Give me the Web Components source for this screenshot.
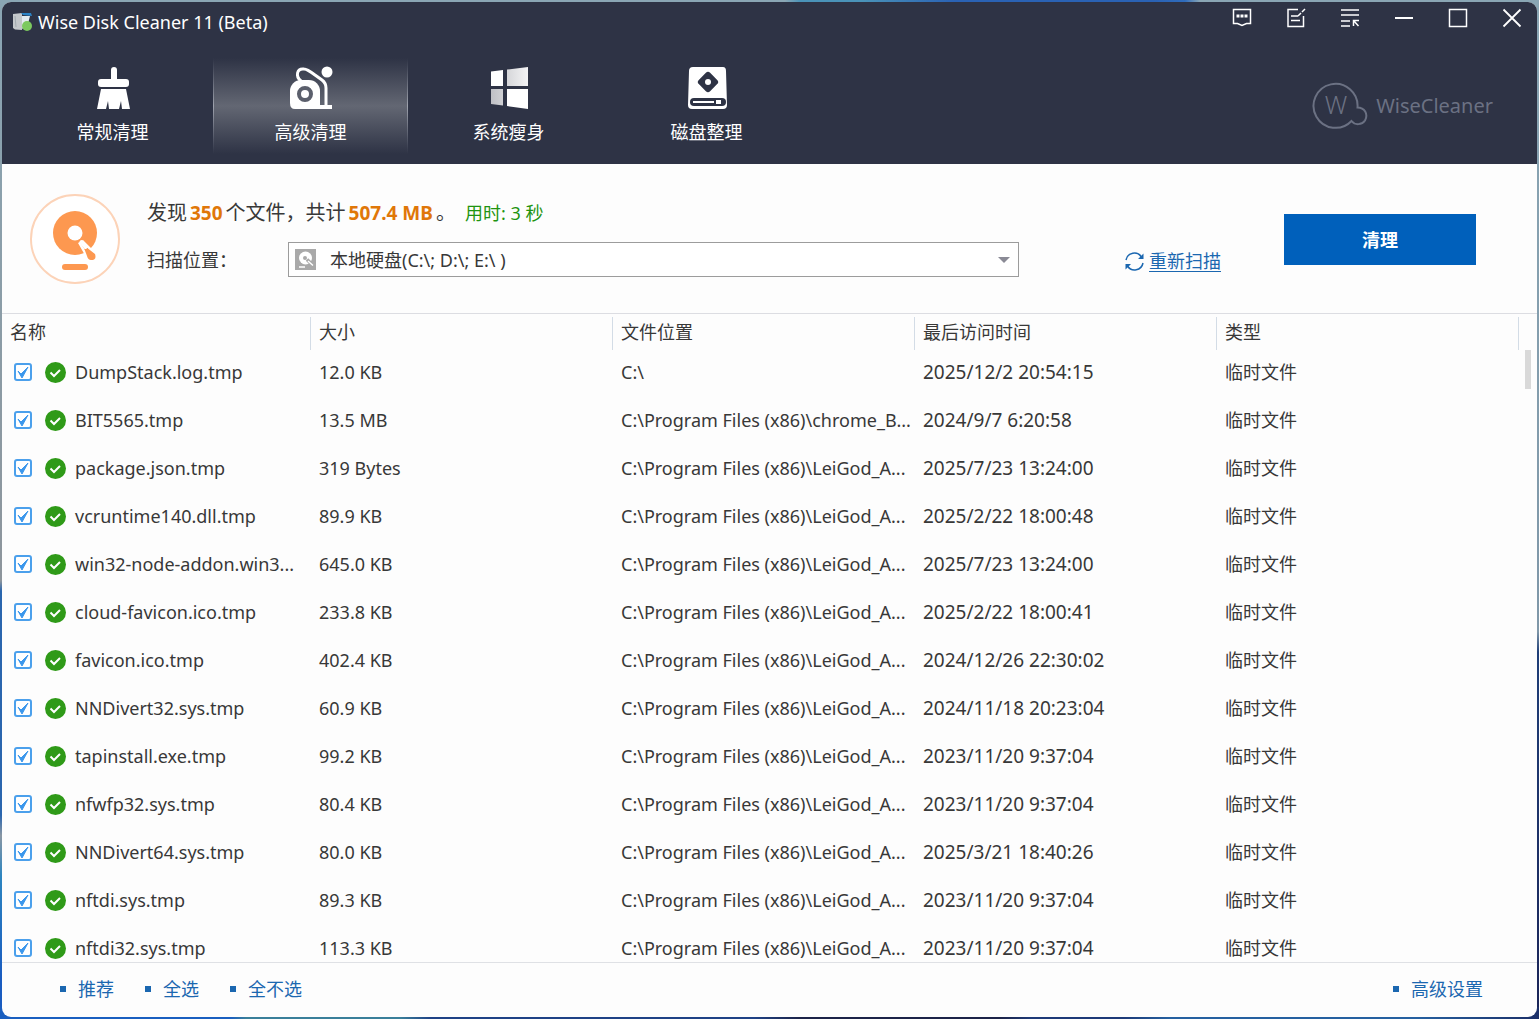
<!DOCTYPE html>
<html lang="zh-CN">
<head>
<meta charset="utf-8">
<title>Wise Disk Cleaner 11 (Beta)</title>
<style>
html, body { height: 100%; margin: 0; }
body {
  --link: #1b67b0;
  --text: #383838;
  box-sizing: border-box;
  padding: 2px;
  background:
    linear-gradient(90deg, #8aa6b4 0 51%, #4a93b8 52% 56%, #2a62b4 62% 75%, #2f6cbc 77%, #8aa6b4 78%) top / 100% 4px no-repeat,
    linear-gradient(90deg, #1a5fc0 0 15%, #3a7f9a 16% 26%, #1f4286 28% 49%, #1c2348 52% 65%, #1d3a78 67% 73%, #2560a0 76% 92%, #1b2f68) bottom / 100% 12px no-repeat,
    linear-gradient(180deg, #8aa6b4, #8d959c 57%, #2a66ae 58% 80%, #8a97a4 82%, #2d85c0 86%, #1a5cc0 96%) left / 12px 100% no-repeat,
    linear-gradient(180deg, #8aa6b4, #7f97a8 62%, #1f3e78 64%, #1b2558) right / 12px 100% no-repeat;
  font: 18px/24px "Noto Sans", "Noto Sans CJK SC", sans-serif;
  color: var(--text);
}
</style>
</head>
<body>
<disk-cleaner></disk-cleaner>

<script>
const define = (name, markup, setup) => {
  const template = document.createElement('template');
  template.innerHTML = markup;
  customElements.define(name, class extends HTMLElement {
    constructor() {
      super();
      this.attachShadow({ mode: 'open' }).append(template.content.cloneNode(true));
    }
    connectedCallback() { if (setup) setup(this, this.shadowRoot); }
  });
};

define('title-bar', `
<style>
  :host { display: flex; align-items: center; height: 40px; padding: 0 15px 0 10px; color: #fff; }
  .name { flex: 1; margin: 0 0 0 5px; font: inherit; }
  .tools { display: flex; gap: 34px; padding-bottom: 8px; }
  button { display: block; width: 20px; height: 20px; padding: 0; border: 0; background: none; color: #fff; }
  svg { display: block; fill: none; stroke: currentColor; }
</style>
<svg width="21" height="20" viewBox="0 0 21 20" stroke="none">
  <path d="M1 2l9-1v17l-7-.5-2-1.500z" fill="#c4c8cb" stroke="none"/>
  <path d="M9 1h10l1 3-9-1z" fill="#2b83c6" stroke="none"/>
  <path d="M10 4h8l-2 8-6 5z" fill="#e3ebf0" stroke="none"/>
  <path d="M3 4l1 11" stroke="#a3abb0"/>
  <circle cx="15" cy="14" r="5" fill="#7cc95f" stroke="none"/>
</svg>
<h1 class="name">Wise Disk Cleaner 11 (Beta)</h1>
<div class="tools">
  <button aria-label="反馈"><svg width="20" height="20" viewBox="0 0 20 20" stroke-width="1.500"><path d="M1.500 1.500h17v14h-4L10 17.500l-4.500-2h-4z"/><path d="M4.500 8h11" stroke-width="3" stroke-dasharray="3 1"/></svg></button>
  <button aria-label="日志"><svg width="20" height="20" viewBox="0 0 20 20" stroke-width="1.500"><path d="M12 1.500H2v17h15.500V8M5 8h7M5 12.500h9M12 8l3-3M16 4l3-3"/></svg></button>
  <button aria-label="菜单"><svg width="20" height="20" viewBox="0 0 20 20" stroke-width="1.500"><path d="M1 2h18M1 7h18M1 13h9M1 18h9M13.500 18v-5.500H19M13.500 12.500l5 5.500"/></svg></button>
  <button aria-label="最小化"><svg width="20" height="20" viewBox="0 0 20 20" stroke-width="2"><path d="M1 10h18"/></svg></button>
  <button aria-label="最大化"><svg width="20" height="20" viewBox="0 0 20 20" stroke-width="1.500"><path d="M1.500 1.500h17v17h-17z"/></svg></button>
  <button aria-label="关闭"><svg width="20" height="20" viewBox="0 0 20 20" stroke-width="1.800"><path d="M1.500 1.500l17 17m0-17l-17 17"/></svg></button>
</div>`);

define('nav-tab', `
<style>
  :host { display: block; width: 195px; }
  button {
    display: flex; flex-direction: column; align-items: center; gap: 10px;
    width: 100%; height: 96px; padding: 8px 0 0; border: 0;
    background: none; color: #fff; font: inherit;
  }
  :host([selected]) button {
    background:
      linear-gradient(#2e3345, #9ea2ad 50%, #2e3345) left / 1px 100% no-repeat,
      linear-gradient(#2e3345, #9ea2ad 50%, #2e3345) right / 1px 100% no-repeat,
      linear-gradient(#2e3345, #636773 50%, #2e3345);
  }
</style>
<button><slot name="icon"></slot><slot></slot></button>`);

define('brand-logo', `
<style>
  :host { display: flex; align-items: center; gap: 8px; color: #6b7183; font-size: 20px; }
  svg { display: block; }
  text { font-size: 25px; font-weight: 300; fill: currentColor; stroke: none; }
</style>
<svg width="56" height="48" viewBox="0 0 56 48" fill="none" stroke="currentColor" stroke-width="2">
  <path d="M45.500 25.500A22 22 0 1 0 39.500 39C43 43.500 50 43 53 38.500C56.500 32 52.500 25.500 45.500 25.500z"/>
  <text x="24" y="32" text-anchor="middle">W</text>
</svg>
<span>WiseCleaner</span>`);

define('app-header', `
<style>
  :host { display: block; height: 162px; background: #2e3345; }
  .bar { display: flex; align-items: center; justify-content: space-between; padding: 16px 44px 0 13px; }
  nav { display: flex; gap: 3px; }
  svg { display: block; }
</style>
<title-bar></title-bar>
<div class="bar">
  <nav>
    <nav-tab>
      <svg slot="icon" width="44" height="44" viewBox="0 0 44 44" fill="#fff">
        <rect x="20" y="1" width="6" height="16" rx="3"/><rect x="7" y="13" width="31" height="8" rx="3"/>
        <path d="M10 23h25l4 20h-8l-1-8-2 8H18l-1-8-2 8H6z"/>
      </svg>常规清理</nav-tab>
    <nav-tab selected>
      <svg slot="icon" width="44" height="44" viewBox="0 0 44 44" fill="#fff">
        <path d="M12 15C6 10 8 2 15 3c3 0 7 3 11 6l7 5q4 3 4 8v19" fill="none" stroke="#fff" stroke-width="3"/>
        <rect x="1" y="14" width="30" height="29" rx="11"/><path d="M1 30h30v13H6q-5 0-5-6z"/>
        <circle cx="16" cy="28" r="6" fill="none" stroke="#5b5f6c" stroke-width="4"/>
        <circle cx="38" cy="6" r="5.500"/><path d="M29 39h14v4H29z"/>
      </svg>高级清理</nav-tab>
    <nav-tab>
      <svg slot="icon" width="44" height="44" viewBox="0 0 44 44">
        <defs>
          <linearGradient id="a" x2="1"><stop stop-color="#bfc0c5"/><stop offset="1" stop-color="#f4f4f5"/></linearGradient>
        </defs>
        <path d="M4 5.500l12-1.500v16H4zM20 23h21v20l-21-3z" fill="#fff"/>
        <path d="M20 3.500l21-2.500v19H20zM4 23h12v16.500L4 38z" fill="url(#a)"/>
      </svg>系统瘦身</nav-tab>
    <nav-tab>
      <svg slot="icon" width="44" height="44" viewBox="0 0 44 44">
        <path d="M8 1h30q3 0 3 4l1 34q0 4-4 4H7q-4 0-4-4L4 5q0-4 4-4z" fill="#fff"/>
        <rect x="15" y="8" width="16" height="16" rx="3" fill="#2e3345" transform="rotate(45 23 16)"/>
        <circle cx="23" cy="16" r="3" fill="#fff"/>
        <rect x="5" y="32" width="36" height="8" rx="4" fill="#2e3345"/>
        <path d="M8 36h21" stroke="#fff" stroke-width="2"/><rect x="31" y="34" width="5" height="4" fill="#fff"/>
      </svg>磁盘整理</nav-tab>
  </nav>
  <brand-logo></brand-logo>
</div>`);

define('scan-panel', `
<style>
  :host { display: flex; align-items: flex-start; height: 150px; box-sizing: border-box; padding: 30px 61px 0 28px; border-bottom: 1px solid #dcdde2; }
  svg { display: block; flex: none; }
  .info { flex: 1; margin: 6px 0 0 27px; }
  .found { display: flex; align-items: center; height: 26px; margin: 0; font-size: 20px; white-space: pre; }
  .found b { margin: 0 3px; color: #e07708; font-size: 19px; }
  .found em { margin-left: 9px; color: #1f9410; font-style: normal; font-size: 18px; }
  .where { display: flex; align-items: center; margin-top: 16px; }
  .where label { width: 141px; }
  .box { display: grid; flex: 1; max-width: 731px; align-items: center; }
  .box > * { grid-area: 1 / 1; }
  select { appearance: none; width: 100%; height: 35px; padding: 0 36px 0 41px; border: 1px solid #9c9c9c; border-radius: 0; background: #fff; color: inherit; font: inherit; }
  .box svg { margin-left: 7px; pointer-events: none; }
  .box svg.arrow { justify-self: end; margin: 0 9px 0 0; }
  a { display: flex; align-items: center; gap: 5px; margin: 55px 63px 0 0; color: var(--link); text-underline-offset: 3px; }
  .clean { width: 192px; height: 51px; margin-top: 20px; border: 0; background: #0060bb; color: #fff; font: inherit; font-weight: 700; }
</style>
<svg width="90" height="90" viewBox="0 0 90 90">
  <circle cx="45" cy="45" r="44" fill="#fff" stroke="#fcd3b8" stroke-width="2"/>
  <circle cx="45" cy="39" r="22" fill="#fd9850"/>
  <circle cx="45" cy="39" r="7.500" fill="#fff"/>
  <path d="M53 46L67 60q2 8-5 7-5 0-6-4L48 49z" fill="#fff"/>
  <path d="M56 53L65 60q2 6-4 6-3 0-4-4L54 54z" fill="#fd9850"/>
  <path d="M51.500 48l6 9" stroke="#fd9850" stroke-width="3" stroke-linecap="round"/>
  <path d="M51.500 48l4 5" stroke="#fff" stroke-width="4" stroke-linecap="round"/>
  <rect x="32" y="70" width="26" height="6" rx="3" fill="#fd9850"/>
</svg>
<div class="info">
  <p class="found">发现<b>350</b>个文件，共计<b>507.4 MB</b>。<em>用时: 3 秒</em></p>
  <div class="where">
    <label for="place">扫描位置：</label>
    <div class="box">
      <select id="place"><option>本地硬盘(C:\\; D:\\; E:\\ )</option></select>
      <svg width="21" height="21" viewBox="0 0 21 21"><path d="M0 0h21v21H0z" fill="#a9a9a9"/><circle cx="10.500" cy="9" r="6.500" fill="#fff"/><circle cx="10" cy="9" r="2" fill="#a9a9a9"/><path d="M12 10.500l6 6" stroke="#a9a9a9" stroke-width="3.500"/><path d="M13 12l5 4.500M4 18h6" stroke="#fff" stroke-width="1.500"/></svg>
      <svg class="arrow" width="12" height="6" viewBox="0 0 12 6"><path d="M0 0h12L6 6z" fill="#8a8a95"/></svg>
    </div>
  </div>
</div>
<a href="#"><svg width="19" height="19" viewBox="0 0 19 19" fill="none" stroke="#1b67b0" stroke-width="1.500"><path d="M1 8A8.500 8.500 0 0 1 16.500 5M18 11A8.500 8.500 0 0 1 2.500 14"/><path d="M18.500 1.500V7H13zM.500 17.500V12H6z" fill="#1b67b0" stroke="none"/></svg>重新扫描</a>
<button class="clean">清理</button>`);

define('file-name', `
<style>
  :host { display: block; }
  label { display: flex; align-items: center; }
  input { appearance: none; flex: none; width: 18px; height: 18px; margin: 0; border: 2px solid #4ba0ec; border-radius: 3px; background: #fff; }
  .tick { display: grid; margin-right: 13px; }
  .tick > * { grid-area: 1 / 1; }
  .tick svg { pointer-events: none; }
  input:not(:checked) + svg { visibility: hidden; }
  .safe { flex: none; margin-right: 9px; }
  svg { display: block; }
</style>
<label>
  <span class="tick"><input type="checkbox" checked>
    <svg width="18" height="18" viewBox="0 0 18 18"><path d="M4 8l3 3 7-7-6 11z" fill="#3b97ec" stroke="#3b97ec" stroke-linejoin="round"/></svg></span>
  <svg class="safe" width="21" height="21" viewBox="0 0 21 21"><circle cx="10.500" cy="10.500" r="10.500" fill="#2f9a18"/><path d="M5.500 10.500l3.500 3.500 6-6" fill="none" stroke="#fff" stroke-width="2"/></svg>
  <slot></slot>
</label>`);

const files = [
  ['DumpStack.log.tmp', '12.0 KB', 'C:\\', '2025/12/2 20:54:15'],
  ['BIT5565.tmp', '13.5 MB', 'C:\\Program Files (x86)\\chrome_B...', '2024/9/7 6:20:58'],
  ['package.json.tmp', '319 Bytes', '', '2025/7/23 13:24:00'],
  ['vcruntime140.dll.tmp', '89.9 KB', '', '2025/2/22 18:00:48'],
  ['win32-node-addon.win3...', '645.0 KB', '', '2025/7/23 13:24:00'],
  ['cloud-favicon.ico.tmp', '233.8 KB', '', '2025/2/22 18:00:41'],
  ['favicon.ico.tmp', '402.4 KB', '', '2024/12/26 22:30:02'],
  ['NNDivert32.sys.tmp', '60.9 KB', '', '2024/11/18 20:23:04'],
  ['tapinstall.exe.tmp', '99.2 KB', '', '2023/11/20 9:37:04'],
  ['nfwfp32.sys.tmp', '80.4 KB', '', '2023/11/20 9:37:04'],
  ['NNDivert64.sys.tmp', '80.0 KB', '', '2025/3/21 18:40:26'],
  ['nftdi.sys.tmp', '89.3 KB', '', '2023/11/20 9:37:04'],
  ['nftdi32.sys.tmp', '113.3 KB', '', '2023/11/20 9:37:04'],
];

define('file-table', `
<style>
  :host { display: grid; grid-template-columns: 1fr 18px; overflow: hidden; background: #fdfdfd; }
  table { width: 100%; table-layout: fixed; border-collapse: collapse; align-self: start; white-space: nowrap; }
  .first { width: 309px; }
  th, td { padding: 0 0 4px 8px; text-align: left; box-sizing: border-box; }
  th { height: 36px; padding-top: 3px; font-weight: 400; background: linear-gradient(#d3dce6, #d3dce6) right bottom / 1px 33px no-repeat; }
  td { height: 48px; }
  td:first-child { padding-left: 12px; }
  td:nth-child(4) { font-size: 19px; }
  .thumb { width: 6px; height: 39px; margin: 36px 0 0 6px; background: #d9d9d9; }
</style>
<table>
  <thead><tr><th class="first">名称</th><th>大小</th><th>文件位置</th><th>最后访问时间</th><th>类型</th></tr></thead>
  <tbody></tbody>
</table>
<div class="thumb"></div>`, (host, root) => {
  const body = root.querySelector('tbody');
  for (const [name, size, place, time] of files) {
    const row = body.insertRow();
    const label = document.createElement('file-name');
    label.textContent = name;
    row.insertCell().append(label);
    for (const value of [size, place || 'C:\\Program Files (x86)\\LeiGod_A...', time, '临时文件'])
      row.insertCell().textContent = value;
  }
});

define('bullet-link', `
<style>
  :host { display: block; }
  a { display: flex; align-items: center; gap: 12px; color: var(--link); text-decoration: none; }
  a::before { content: ""; width: 6px; height: 6px; background: var(--link); }
</style>
<a href="#"><slot></slot></a>`);

define('app-footer', `
<style>
  :host { display: flex; align-items: center; gap: 31px; height: 55px; box-sizing: border-box; padding: 0 54px 2px 58px; border-top: 1px solid #dfe1e5; }
  .last { margin-left: auto; }
</style>
<bullet-link>推荐</bullet-link><bullet-link>全选</bullet-link><bullet-link>全不选</bullet-link>
<bullet-link class="last">高级设置</bullet-link>`);

define('disk-cleaner', `
<style>
  :host { display: grid; grid-template-rows: auto auto 1fr auto; height: 100%; border-radius: 9px; overflow: hidden; background: #fdfdfd; }
  file-table { min-height: 0; }
</style>
<app-header></app-header>
<scan-panel></scan-panel>
<file-table></file-table>
<app-footer></app-footer>`);
</script>
</body>
</html>
